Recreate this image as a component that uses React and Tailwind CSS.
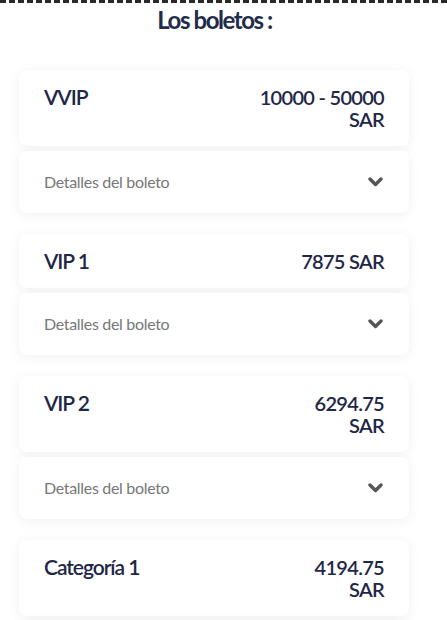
const tickets = [
  { name: 'VVIP', price: ['10000 - 50000', 'SAR'] },
  { name: 'VIP 1', price: ['7875 SAR'] },
  { name: 'VIP 2', price: ['6294.75', 'SAR'] },
  { name: 'Categoría 1', price: ['4194.75', 'SAR'] },
];

function Chevron() {
  return (
    <svg className="w-[15px] h-[10px] mr-[1px] text-[#555]" viewBox="0 0 15 10" fill="none">
      <path d="M2 2l5.5 5.5L13 2" stroke="currentColor" strokeWidth="3.4" strokeLinecap="round" strokeLinejoin="round" />
    </svg>
  );
}

function TicketCard({ ticket }) {
  return (
    <div className="flex flex-col gap-[5px]">
      <div className="flex justify-between items-start bg-white rounded-lg shadow-[0_2px_14px_rgba(0,0,0,0.06)] px-[25px] py-4">
        <span className="text-[21px] leading-[22px] font-semibold tracking-[-0.05em] text-[#1f2747]">{ticket.name}</span>
        <div className="flex flex-col items-end text-[20px] leading-[22px] font-semibold tracking-[-0.035em] text-[#1f2747]">
          {ticket.price.map((line) => (
            <span key={line} className="block h-[22px]">{line}</span>
          ))}
        </div>
      </div>
      <div className="flex justify-between items-center bg-white rounded-lg shadow-[0_2px_14px_rgba(0,0,0,0.06)] px-[25px] py-5">
        <span className="text-[16px] leading-[22px] tracking-[-0.02em] text-[#777]">Detalles del boleto</span>
        <Chevron />
      </div>
    </div>
  );
}

export default function App() {
  return (
    <div className="w-[447px] h-[620px] overflow-hidden bg-white font-['Lato',sans-serif]">
      <div className="h-[3px] border-t-[3px] border-dashed border-[#2a2a2a]" />
      <h1 className="text-center text-[24px] leading-[28px] font-bold tracking-[-0.06em] text-[#232b4a] mt-[3px] pr-[18px]">
        Los boletos :
      </h1>
      <div className="flex flex-col gap-[21px] pl-[19px] pr-[38px] mt-[36px]">
        {tickets.map((t) => (
          <TicketCard key={t.name} ticket={t} />
        ))}
      </div>
    </div>
  );
}
